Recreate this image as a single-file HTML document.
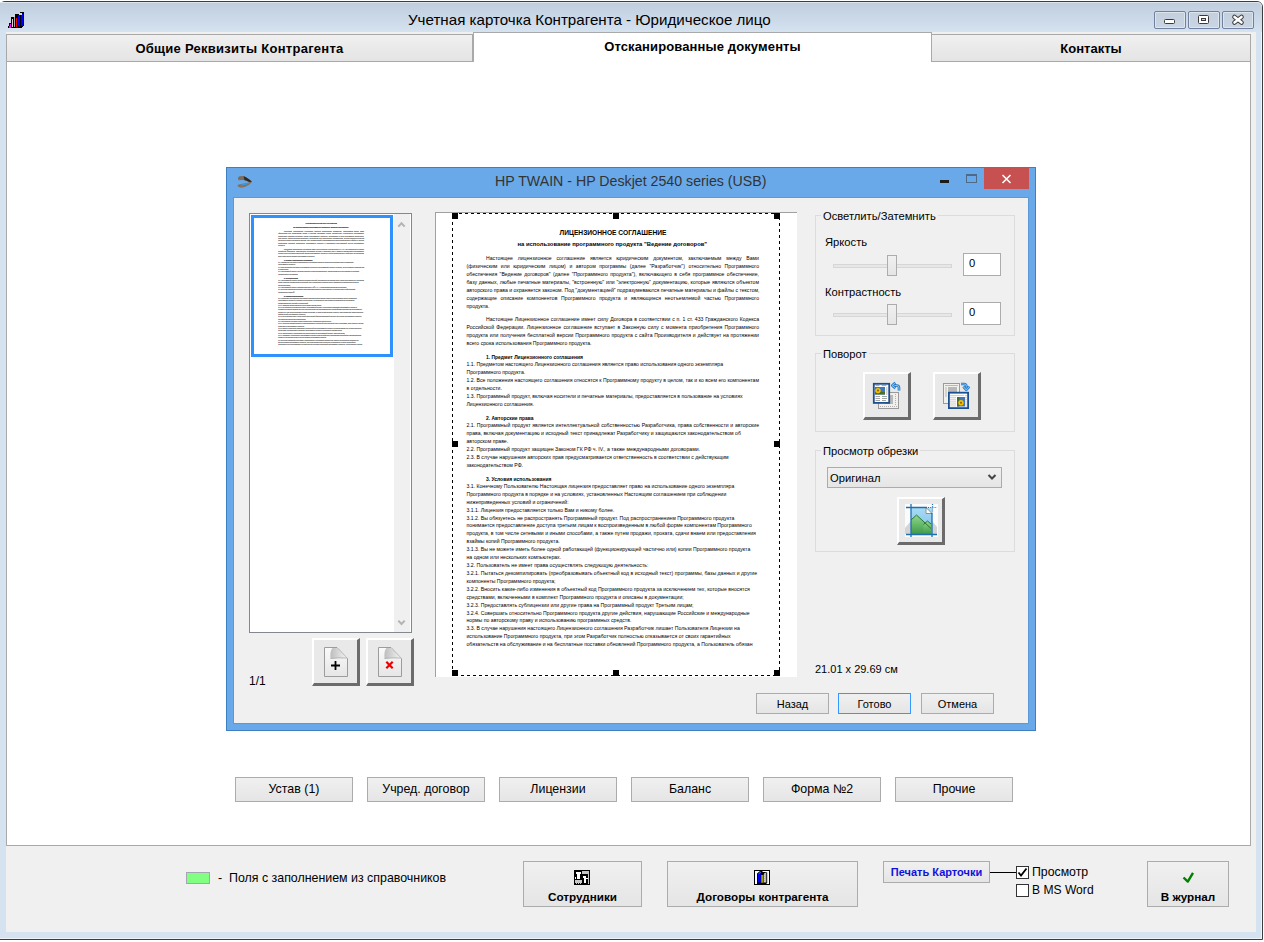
<!DOCTYPE html>
<html><head><meta charset="utf-8">
<style>
*{margin:0;padding:0;box-sizing:border-box}
html,body{width:1264px;height:942px;overflow:hidden;background:#fff;font-family:"Liberation Sans",sans-serif;color:#000}
.a{position:absolute}
#win{position:absolute;left:-1px;top:1px;width:1264px;height:939px;border:1px solid #3d3d3d;border-radius:6px 6px 0 0;background:#d5e3f1;box-shadow:inset -1px -1px 0 #edf3f9}
#tbar{position:absolute;left:0;top:2px;width:1262px;height:30px;border-radius:0 5px 0 0;background:linear-gradient(#bfcddd,#d5e2f0);box-shadow:inset 0 1px 0 #dce6f0}
#client{position:absolute;left:6px;top:32px;width:1250px;height:900px;background:#f0f0f0}
.tab{position:absolute;top:34px;height:28px;border:1px solid #a9a9a9;background:linear-gradient(#f0f0f0,#e4e4e4);font-weight:bold;font-size:13px;text-align:center;line-height:28px}
.tab.act{top:32px;height:30px;background:#fff;border-bottom:none;line-height:28px;z-index:2}
#panel{position:absolute;left:6px;top:61px;width:1245px;height:785px;background:#fff;border:1px solid #a9a9a9}
.wbtn{position:absolute;top:11px;width:32px;height:18px;border:1px solid #71809e;border-radius:2px;background:linear-gradient(#c3cfdc,#c9d5e3);box-shadow:inset 0 0 0 1px #dde6ef}
.btn{position:absolute;border:1px solid #acacac;background:linear-gradient(#f0f0f0,#e5e5e5);font-size:12.5px;text-align:center;color:#000}
.btn3d{position:absolute;background:#ececec}

.hd{width:6px;height:6px;background:#000}
.gb{border:1px solid #dcdcdc}
.gl{font-size:11.2px;background:#f0f0f0;padding:0 2px;white-space:nowrap;color:#000;line-height:14px}
.trk{width:119px;height:4px;border:1px solid #d6d6d6;background:#e7e7e7}
.thm{width:10px;height:21px;border:1px solid #acacac;background:linear-gradient(#f0f0f0,#e5e5e5)}
.ed{width:39px;height:23px;border:1px solid #acacac;background:#fff;font-size:11.2px;padding:3px 0 0 5px}
.b3{background:#e9e9e9;border-top:2px solid #fff;border-left:2px solid #fff;border-right:3px solid #6b6b6b;border-bottom:3px solid #6b6b6b}
.dbtn{width:73px;height:21px;border:1px solid #acacac;background:linear-gradient(#f0f0f0,#e5e5e5);font-size:11px;text-align:center;line-height:21px}
.dl{position:absolute;white-space:nowrap;font-size:5.15px;line-height:8px;color:#000}
.db{font-weight:bold}

.rb{top:777px;width:118px;height:25px;line-height:23px;font-size:12.4px}
.bb{top:861px;height:46px;font-weight:bold;font-size:11.7px;padding-top:28px;line-height:14px}
.cb{width:13px;height:13px;border:1px solid #333;background:#fff}
.thumb .dl{color:#555;-webkit-text-stroke:0.45px #777}
.thumb .db{color:#333;-webkit-text-stroke:0.6px #555}
</style></head><body>
<div id="win"></div>
<div id="tbar"></div>
<div id="client"></div>

<!-- tabs -->
<div class="tab" style="left:6px;width:467px;letter-spacing:0.27px">Общие Реквизиты Контрагента</div>
<div class="tab act" style="left:473px;width:459px;letter-spacing:0.12px">Отсканированные документы</div>
<div class="tab" style="left:931px;width:320px">Контакты</div>
<div id="panel"></div>

<!-- title -->
<div class="a" style="left:408px;top:11px;font-size:15.15px;white-space:nowrap;color:#000">Учетная карточка Контрагента - Юридическое лицо</div>

<div class="wbtn" style="left:1154px"></div>
<div class="wbtn" style="left:1188px"></div>
<div class="wbtn" style="left:1222px"></div>



<!-- ================= DOC BUTTON ROW ================= -->
<div class="btn rb" style="left:235px">Устав (1)</div>
<div class="btn rb" style="left:367px">Учред. договор</div>
<div class="btn rb" style="left:499px">Лицензии</div>
<div class="btn rb" style="left:631px">Баланс</div>
<div class="btn rb" style="left:763px">Форма №2</div>
<div class="btn rb" style="left:895px">Прочие</div>

<!-- ================= BOTTOM BAR ================= -->
<div class="a" style="left:186px;top:872px;width:24px;height:12px;border:1px solid #a4a4b4;background:#80ff80"></div>
<div class="a" style="left:218px;top:870.7px;font-size:12.4px;white-space:nowrap">-&nbsp; Поля с заполнением из справочников</div>

<div class="btn bb" style="left:523px;width:119px">Сотрудники</div>
<div class="btn bb" style="left:667px;width:191px">Договоры контрагента</div>
<div class="btn" style="left:883px;top:861px;width:107px;height:22px;font-weight:bold;font-size:11px;color:#1010e0;line-height:20px">Печать Карточки</div>
<div class="a" style="left:990px;top:872px;width:26px;height:1px;background:#000"></div>
<div class="a cb" style="left:1016px;top:866px"></div>
<svg class="a" style="left:1016px;top:866px" width="13" height="13" viewBox="0 0 13 13"><path d="M2.5 6.5 L5 9.5 L10.5 2.5" stroke="#000" stroke-width="1.8" fill="none"/></svg>
<div class="a" style="left:1032px;top:865px;font-size:12.3px;white-space:nowrap">Просмотр</div>
<div class="a cb" style="left:1016px;top:884px"></div>
<div class="a" style="left:1032px;top:883px;font-size:12.1px;white-space:nowrap">В MS Word</div>
<div class="btn bb" style="left:1147px;width:82px">В журнал</div>


<!-- ================= ICONS main ================= -->
<svg class="a" style="left:8px;top:12px" width="16" height="16" viewBox="0 0 16 16" shape-rendering="crispEdges">
 <path d="M12 0H16V14H15V15H14V16H9V3H10V2H11V1H12Z" fill="#000"/>
 <rect x="10" y="3" width="2" height="12" fill="#0000ff"/>
 <rect x="13" y="2" width="2" height="12" fill="#0000ff"/>
 <rect x="11" y="1" width="3" height="2" fill="#e8dcc8"/>
 <rect x="10" y="14" width="1" height="1" fill="#000"/>
 <rect x="7" y="2" width="3" height="14" fill="#000"/>
 <rect x="8" y="6" width="1" height="9" fill="#ff0000"/>
 <rect x="5" y="3" width="2" height="13" fill="#000"/>
 <rect x="6" y="5" width="1" height="10" fill="#a8a8a8"/>
 <rect x="5" y="3" width="2" height="2" fill="#d8d8d8"/>
 <rect x="3" y="5" width="2" height="11" fill="#000"/>
 <rect x="4" y="7" width="1" height="8" fill="#e8d0d0"/>
 <rect x="1" y="11" width="2" height="5" fill="#000"/>
 <rect x="2" y="12" width="1" height="4" fill="#ff00ff"/>
 <rect x="1" y="14" width="1" height="2" fill="#ff00ff"/>
 <rect x="0" y="14" width="1" height="2" fill="#000"/>
</svg>
<!-- caption buttons glyphs -->
<svg class="a" style="left:1154px;top:11px" width="100" height="18" viewBox="0 0 100 18">
 <rect x="10.5" y="8.5" width="10" height="4" rx="1" fill="#fff" stroke="#3a3a3a" stroke-width="1"/>
 <rect x="44.5" y="4.5" width="10" height="8" rx="1" fill="#fff" stroke="#3a3a3a" stroke-width="1"/>
 <rect x="47.5" y="7.5" width="4" height="2" fill="#c8d4e2" stroke="#3a3a3a" stroke-width="1"/>
 <path d="M80.5 6 L87.5 11.5 M87.5 6 L80.5 11.5" stroke="#3a3a3a" stroke-width="4.6" stroke-linecap="round"/>
 <path d="M80.5 6 L87.5 11.5 M87.5 6 L80.5 11.5" stroke="#fff" stroke-width="2.6" stroke-linecap="round"/>
</svg>
<!-- sotrudniki icon -->
<svg class="a" style="left:574px;top:870px" width="16" height="15" viewBox="0 0 16 15" shape-rendering="crispEdges">
 <rect width="16" height="15" fill="#000"/>
 <path d="M2 2H7V4H5.5V9H3V4H2Z" fill="#fff"/>
 <rect x="1" y="7" width="1" height="2" fill="#fff"/>
 <rect x="8" y="1" width="7" height="3" fill="#c4c4c4"/>
 <rect x="14" y="4" width="1" height="10" fill="#c4c4c4"/>
 <path d="M8.5 6H12V7.5H13.5V9H12V13H9.5V8H8.5Z" fill="#fff"/>
 <path d="M1 10H8V13H7V14H6V13H5V14H4V13H3V14H2V13H1Z" fill="#c8c8c8"/>
</svg>
<!-- dogovory icon -->
<svg class="a" style="left:754px;top:870px" width="16" height="15" viewBox="0 0 16 15">
 <rect width="16" height="15" fill="#000"/>
 <rect x="1" y="1" width="14" height="13" fill="#fff"/>
 <path d="M3 3.5 L6 1 H8.5 V2 H12 L13.2 2.5 V13 L12 14 H3 Z" fill="#000"/>
 <path d="M4 4 L6.8 1.8 V12.5 H4Z" fill="#0000ff"/>
 <path d="M4.8 3.6 L6.8 2" stroke="#fff" stroke-width="0.8" stroke-dasharray="0.8 0.6"/>
 <rect x="7.2" y="5" width="2.2" height="7.8" fill="#a0a000"/>
 <path d="M9.8 4 L12.3 2.6 V12.5 H9.8Z" fill="#b8b8b8"/>
 <path d="M9.8 4 L12 2.6 H12.6 L10.6 4Z" fill="#fff"/>
 <path d="M10.5 5 V12" stroke="#e8e8e8" stroke-width="0.6" stroke-dasharray="1 1"/>
</svg>
<!-- check -->
<svg class="a" style="left:1180px;top:869px" width="16" height="16" viewBox="0 0 16 16"><path d="M3.5 8.5 L7.8 12.6 L13 3.8" stroke="#008000" stroke-width="2.4" fill="none" stroke-linejoin="round"/></svg>

<!-- ================= DIALOG ================= -->
<div class="a" style="left:226px;top:167px;width:810px;height:564px;border:1px solid #3d7fc1;background:#69a9ea"></div>
<div class="a" style="left:233px;top:197px;width:796px;height:527px;border:1px solid #5a98d6;background:#f0f0f0"></div>
<!-- scanner icon -->
<svg class="a" style="left:236px;top:175px" width="18" height="14" viewBox="0 0 18 14">
 <path d="M2 2.4 Q3 0.8 6.5 1 Q10.5 1.6 15.8 6.6 L14.2 7.6 Q10 5.2 6.5 5 Q3.6 4.9 2.4 5.2 Z" fill="#7d6d5f"/>
 <path d="M7.5 1.2 Q10.5 1.8 15.8 6.6 L14.2 7.6 Q11 5.4 8.5 4.9 Z" fill="#2f2924"/>
 <path d="M1.4 10.2 Q2 12.8 6.5 12.6 Q10.5 12.2 15.8 7.6 L14.4 6.8 Q10 8.6 6.5 8.8 Q3 9 1.4 10.2 Z" fill="#85705c"/>
 <path d="M4.5 9.6 Q10 9 14.2 7.2 L13.4 8.6 Q9 10.6 5 10.8 Z" fill="#3a9ad8"/>
</svg>
<div class="a" style="left:495px;top:173px;font-size:14.2px;color:#333;white-space:nowrap">HP TWAIN - HP Deskjet 2540 series (USB)</div>
<!-- min / max / close -->
<div class="a" style="left:940px;top:180px;width:9px;height:3px;background:#1c1c1c"></div>
<div class="a" style="left:966px;top:174px;width:11px;height:9px;border:1px solid #4d6a88;border-top-width:2px"></div>
<div class="a" style="left:984px;top:168px;width:45px;height:21px;background:#c75050"></div>
<svg class="a" style="left:984px;top:168px" width="45" height="21" viewBox="0 0 45 21"><path d="M18.5 7 L26.5 15 M26.5 7 L18.5 15" stroke="#fff" stroke-width="1.6"/></svg>

<!-- listbox -->
<div class="a" style="left:249px;top:213px;width:163px;height:420px;border:1px solid #828790;background:#fff"></div>
<div class="a" style="left:394px;top:214px;width:16px;height:418px;background:#f0f0f0"></div>
<svg class="a" style="left:394px;top:214px" width="16" height="418" viewBox="0 0 16 418">
 <path d="M4.3 12.6 L7.5 9.2 L10.7 12.6" stroke="#b4b4b4" stroke-width="2" fill="none"/>
 <path d="M4.3 406.6 L7.5 410 L10.7 406.6" stroke="#b4b4b4" stroke-width="2" fill="none"/>
</svg>
<div class="a" style="left:251px;top:215px;width:142px;height:142px;border:3px solid #2e91fd;background:#fff;overflow:hidden" id="thumbbox"><div class="thumb" style="position:absolute;left:20.05px;top:-0.2px;width:328px;height:463px;transform:scale(0.293,0.294);transform-origin:0 0">
<div class="dl db" style="left:107.60px;top:16.10px;width:106.80px;font-size:6.67px;text-align-last:justify;text-align:justify">ЛИЦЕНЗИОННОЕ СОГЛАШЕНИЕ</div>
<div class="dl db" style="left:65.50px;top:27.29px;font-size:5.87px">на использование программного продукта "Ведение договоров"</div>
<div class="dl" style="left:34.00px;top:40.95px;width:273.00px;text-align:justify;text-align-last:justify">Настоящее лицензионное соглашение является юридическим документом, заключаемым между Вами</div>
<div class="dl" style="left:14.50px;top:48.95px;width:292.50px;text-align:justify;text-align-last:justify">(физическим или юридическим лицом) и автором программы (далее  &quot;Разработчик&quot;) относительно Программного</div>
<div class="dl" style="left:14.50px;top:56.95px;width:292.50px;text-align:justify;text-align-last:justify">обеспечения &quot;Ведение договоров&quot; (далее &quot;Программного продукта&quot;), включающего в себя программное обеспечение,</div>
<div class="dl" style="left:14.50px;top:64.85px;width:292.50px;text-align:justify;text-align-last:justify">базу данных, любые печатные материалы, &quot;встроенную&quot; или &quot;электронную&quot; документацию, которые являются объектом</div>
<div class="dl" style="left:14.50px;top:72.85px;width:292.50px;text-align:justify;text-align-last:justify">авторского права и охраняется законом. Под &quot;документацией&quot; подразумеваются печатные материалы и файлы с текстом,</div>
<div class="dl" style="left:14.50px;top:80.85px;width:292.50px;text-align:justify;text-align-last:justify">содержащие описание компонентов Программного продукта и являющиеся неотъемлемой частью Программного</div>
<div class="dl" style="left:14.50px;top:88.85px">продукта.</div>
<div class="dl" style="left:34.00px;top:101.55px;width:273.00px;text-align:justify;text-align-last:justify">Настоящее Лицензионное соглашение имеет силу Договора в соответствии с п. 1 ст. 433 Гражданского Кодекса</div>
<div class="dl" style="left:14.50px;top:109.55px;width:292.50px;text-align:justify;text-align-last:justify">Российской Федерации. Лицензионное соглашение вступает в Законную силу с момента приобретения Программного</div>
<div class="dl" style="left:14.50px;top:117.55px;width:292.50px;text-align:justify;text-align-last:justify">продукта или получения бесплатной версии Программного продукта с сайта Производителя и действует на протяжении</div>
<div class="dl" style="left:14.50px;top:125.55px">всего срока использования Программного продукта.</div>
<div class="dl db" style="left:34.00px;top:140.87px;font-size:4.96px">1. Предмет Лицензионного соглашения</div>
<div class="dl" style="left:14.50px;top:146.75px">1.1. Предметом настоящего Лицензионного соглашения является право использования одного экземпляра</div>
<div class="dl" style="left:14.50px;top:154.75px">Программного продукта.</div>
<div class="dl" style="left:14.50px;top:162.75px;width:292.50px;text-align:justify;text-align-last:justify">1.2. Все положения настоящего соглашения относятся к Программному продукту в целом, так и ко всем его компонентам</div>
<div class="dl" style="left:14.50px;top:170.75px">в отдельности.</div>
<div class="dl" style="left:14.50px;top:178.65px">1.3. Программный продукт, включая носители и печатные материалы, предоставляется в пользование на условиях</div>
<div class="dl" style="left:14.50px;top:186.65px">Лицензионного соглашения.</div>
<div class="dl db" style="left:34.00px;top:202.17px;font-size:4.96px">2. Авторские права</div>
<div class="dl" style="left:14.50px;top:208.35px;width:292.50px;text-align:justify;text-align-last:justify">2.1. Программный продукт является интеллектуальной собственностью Разработчика, права собственности и авторские</div>
<div class="dl" style="left:14.50px;top:216.25px">права, включая документацию и исходный текст принадлежат  Разработчику и защищаются законодательством об</div>
<div class="dl" style="left:14.50px;top:224.25px">авторском праве.</div>
<div class="dl" style="left:14.50px;top:231.95px">2.2. Программный продукт защищен Законом ГК РФ ч. IV., а также международными договорами.</div>
<div class="dl" style="left:14.50px;top:239.95px">2.3. В случае нарушения авторских прав предусматривается ответственность в соответствии с действующим</div>
<div class="dl" style="left:14.50px;top:247.95px">законодательством РФ.</div>
<div class="dl db" style="left:34.00px;top:263.07px;font-size:4.96px">3. Условия использования</div>
<div class="dl" style="left:14.50px;top:268.85px">3.1. Конечному Пользователю Настоящая лицензия предоставляет право на использование одного экземпляра</div>
<div class="dl" style="left:14.50px;top:276.77px">Программного продукта в порядке и на условиях, установленных Настоящим соглашением при соблюдении</div>
<div class="dl" style="left:14.50px;top:284.69px">нижеприведенных условий и ограничений:</div>
<div class="dl" style="left:14.50px;top:292.61px">3.1.1. Лицензия предоставляется только Вам и никому более.</div>
<div class="dl" style="left:14.50px;top:300.53px">3.1.2. Вы обязуетесь не распространять Программный продукт. Под распространением Программного продукта</div>
<div class="dl" style="left:14.50px;top:308.45px">понимается предоставление доступа третьим лицам к воспроизведенным в любой форме компонентам Программного</div>
<div class="dl" style="left:14.50px;top:316.37px">продукта, в том числе сетевыми и иными способами, а также путем продажи, проката, сдачи внаем или предоставления</div>
<div class="dl" style="left:14.50px;top:324.29px">взаймы копий Программного продукта.</div>
<div class="dl" style="left:14.50px;top:332.21px">3.1.3. Вы не можете иметь более одной работающей (функционирующей частично или) копии Программного продукта</div>
<div class="dl" style="left:14.50px;top:340.13px">на одном или нескольких компьютерах.</div>
<div class="dl" style="left:14.50px;top:348.05px">3.2. Пользователь не имеет права осуществлять следующую деятельность:</div>
<div class="dl" style="left:14.50px;top:355.97px">3.2.1. Пытаться декомпилировать (преобразовывать объектный код в исходный текст) программы, базы данных и другие</div>
<div class="dl" style="left:14.50px;top:363.89px">компоненты Программного продукта;</div>
<div class="dl" style="left:14.50px;top:371.81px">3.2.2. Вносить какие-либо изменения в объектный код Программного продукта за исключением тех, которые вносятся</div>
<div class="dl" style="left:14.50px;top:379.73px">средствами, включенными в комплект Программного продукта и описаны в документации;</div>
<div class="dl" style="left:14.50px;top:387.65px">3.2.3. Предоставлять сублицензии или другие права на Программный продукт Третьим лицам;</div>
<div class="dl" style="left:14.50px;top:395.57px">3.2.4. Совершать относительно Программного продукта другие действия, нарушающие Российские и международные</div>
<div class="dl" style="left:14.50px;top:403.49px">нормы по авторскому праву и использованию программных средств.</div>
<div class="dl" style="left:14.50px;top:411.41px">3.3. В случае нарушения настоящего Лицензионного соглашения Разработчик лишает Пользователя Лицензии на</div>
<div class="dl" style="left:14.50px;top:419.33px">использование Программного продукта, при этом Разработчик полностью отказывается от своих гарантийных</div>
<div class="dl" style="left:14.50px;top:427.25px">обязательств на обслуживание и на бесплатные поставки обновлений Программного продукта, а Пользователь обязан</div>
</div></div>

<!-- add / delete buttons -->
<div class="a b3" style="left:312px;top:638px;width:48px;height:48px"></div>
<div class="a b3" style="left:366px;top:638px;width:48px;height:48px"></div>
<div class="a" style="left:249px;top:674px;font-size:12px;color:#000">1/1</div>

<!-- preview -->
<div class="a" style="left:435px;top:212px;width:362px;height:465px;background:#fff;border-left:1px solid #a0a0a0;border-top:1px solid #a0a0a0"></div>
<div class="a" id="doc" style="left:452px;top:213px;width:328px;height:463px">
<div class="dl db" style="left:107.60px;top:16.10px;width:106.80px;font-size:6.67px;text-align-last:justify;text-align:justify">ЛИЦЕНЗИОННОЕ СОГЛАШЕНИЕ</div>
<div class="dl db" style="left:65.50px;top:27.29px;font-size:5.87px">на использование программного продукта "Ведение договоров"</div>
<div class="dl" style="left:34.00px;top:40.95px;width:273.00px;text-align:justify;text-align-last:justify">Настоящее лицензионное соглашение является юридическим документом, заключаемым между Вами</div>
<div class="dl" style="left:14.50px;top:48.95px;width:292.50px;text-align:justify;text-align-last:justify">(физическим или юридическим лицом) и автором программы (далее  &quot;Разработчик&quot;) относительно Программного</div>
<div class="dl" style="left:14.50px;top:56.95px;width:292.50px;text-align:justify;text-align-last:justify">обеспечения &quot;Ведение договоров&quot; (далее &quot;Программного продукта&quot;), включающего в себя программное обеспечение,</div>
<div class="dl" style="left:14.50px;top:64.85px;width:292.50px;text-align:justify;text-align-last:justify">базу данных, любые печатные материалы, &quot;встроенную&quot; или &quot;электронную&quot; документацию, которые являются объектом</div>
<div class="dl" style="left:14.50px;top:72.85px;width:292.50px;text-align:justify;text-align-last:justify">авторского права и охраняется законом. Под &quot;документацией&quot; подразумеваются печатные материалы и файлы с текстом,</div>
<div class="dl" style="left:14.50px;top:80.85px;width:292.50px;text-align:justify;text-align-last:justify">содержащие описание компонентов Программного продукта и являющиеся неотъемлемой частью Программного</div>
<div class="dl" style="left:14.50px;top:88.85px">продукта.</div>
<div class="dl" style="left:34.00px;top:101.55px;width:273.00px;text-align:justify;text-align-last:justify">Настоящее Лицензионное соглашение имеет силу Договора в соответствии с п. 1 ст. 433 Гражданского Кодекса</div>
<div class="dl" style="left:14.50px;top:109.55px;width:292.50px;text-align:justify;text-align-last:justify">Российской Федерации. Лицензионное соглашение вступает в Законную силу с момента приобретения Программного</div>
<div class="dl" style="left:14.50px;top:117.55px;width:292.50px;text-align:justify;text-align-last:justify">продукта или получения бесплатной версии Программного продукта с сайта Производителя и действует на протяжении</div>
<div class="dl" style="left:14.50px;top:125.55px">всего срока использования Программного продукта.</div>
<div class="dl db" style="left:34.00px;top:140.87px;font-size:4.96px">1. Предмет Лицензионного соглашения</div>
<div class="dl" style="left:14.50px;top:146.75px">1.1. Предметом настоящего Лицензионного соглашения является право использования одного экземпляра</div>
<div class="dl" style="left:14.50px;top:154.75px">Программного продукта.</div>
<div class="dl" style="left:14.50px;top:162.75px;width:292.50px;text-align:justify;text-align-last:justify">1.2. Все положения настоящего соглашения относятся к Программному продукту в целом, так и ко всем его компонентам</div>
<div class="dl" style="left:14.50px;top:170.75px">в отдельности.</div>
<div class="dl" style="left:14.50px;top:178.65px">1.3. Программный продукт, включая носители и печатные материалы, предоставляется в пользование на условиях</div>
<div class="dl" style="left:14.50px;top:186.65px">Лицензионного соглашения.</div>
<div class="dl db" style="left:34.00px;top:202.17px;font-size:4.96px">2. Авторские права</div>
<div class="dl" style="left:14.50px;top:208.35px;width:292.50px;text-align:justify;text-align-last:justify">2.1. Программный продукт является интеллектуальной собственностью Разработчика, права собственности и авторские</div>
<div class="dl" style="left:14.50px;top:216.25px">права, включая документацию и исходный текст принадлежат  Разработчику и защищаются законодательством об</div>
<div class="dl" style="left:14.50px;top:224.25px">авторском праве.</div>
<div class="dl" style="left:14.50px;top:231.95px">2.2. Программный продукт защищен Законом ГК РФ ч. IV., а также международными договорами.</div>
<div class="dl" style="left:14.50px;top:239.95px">2.3. В случае нарушения авторских прав предусматривается ответственность в соответствии с действующим</div>
<div class="dl" style="left:14.50px;top:247.95px">законодательством РФ.</div>
<div class="dl db" style="left:34.00px;top:263.07px;font-size:4.96px">3. Условия использования</div>
<div class="dl" style="left:14.50px;top:268.85px">3.1. Конечному Пользователю Настоящая лицензия предоставляет право на использование одного экземпляра</div>
<div class="dl" style="left:14.50px;top:276.77px">Программного продукта в порядке и на условиях, установленных Настоящим соглашением при соблюдении</div>
<div class="dl" style="left:14.50px;top:284.69px">нижеприведенных условий и ограничений:</div>
<div class="dl" style="left:14.50px;top:292.61px">3.1.1. Лицензия предоставляется только Вам и никому более.</div>
<div class="dl" style="left:14.50px;top:300.53px">3.1.2. Вы обязуетесь не распространять Программный продукт. Под распространением Программного продукта</div>
<div class="dl" style="left:14.50px;top:308.45px">понимается предоставление доступа третьим лицам к воспроизведенным в любой форме компонентам Программного</div>
<div class="dl" style="left:14.50px;top:316.37px">продукта, в том числе сетевыми и иными способами, а также путем продажи, проката, сдачи внаем или предоставления</div>
<div class="dl" style="left:14.50px;top:324.29px">взаймы копий Программного продукта.</div>
<div class="dl" style="left:14.50px;top:332.21px">3.1.3. Вы не можете иметь более одной работающей (функционирующей частично или) копии Программного продукта</div>
<div class="dl" style="left:14.50px;top:340.13px">на одном или нескольких компьютерах.</div>
<div class="dl" style="left:14.50px;top:348.05px">3.2. Пользователь не имеет права осуществлять следующую деятельность:</div>
<div class="dl" style="left:14.50px;top:355.97px">3.2.1. Пытаться декомпилировать (преобразовывать объектный код в исходный текст) программы, базы данных и другие</div>
<div class="dl" style="left:14.50px;top:363.89px">компоненты Программного продукта;</div>
<div class="dl" style="left:14.50px;top:371.81px">3.2.2. Вносить какие-либо изменения в объектный код Программного продукта за исключением тех, которые вносятся</div>
<div class="dl" style="left:14.50px;top:379.73px">средствами, включенными в комплект Программного продукта и описаны в документации;</div>
<div class="dl" style="left:14.50px;top:387.65px">3.2.3. Предоставлять сублицензии или другие права на Программный продукт Третьим лицам;</div>
<div class="dl" style="left:14.50px;top:395.57px">3.2.4. Совершать относительно Программного продукта другие действия, нарушающие Российские и международные</div>
<div class="dl" style="left:14.50px;top:403.49px">нормы по авторскому праву и использованию программных средств.</div>
<div class="dl" style="left:14.50px;top:411.41px">3.3. В случае нарушения настоящего Лицензионного соглашения Разработчик лишает Пользователя Лицензии на</div>
<div class="dl" style="left:14.50px;top:419.33px">использование Программного продукта, при этом Разработчик полностью отказывается от своих гарантийных</div>
<div class="dl" style="left:14.50px;top:427.25px">обязательств на обслуживание и на бесплатные поставки обновлений Программного продукта, а Пользователь обязан</div>
</div>
<div class="a" style="left:452px;top:213px;width:328px;height:1px;background:repeating-linear-gradient(90deg,#000 0 3px,transparent 3px 6px);background-position:1px 0"></div>
<div class="a" style="left:452px;top:675px;width:328px;height:1px;background:repeating-linear-gradient(90deg,#000 0 3px,transparent 3px 6px);background-position:3px 0"></div>
<div class="a" style="left:452px;top:213px;width:1px;height:463px;background:repeating-linear-gradient(180deg,#000 0 3px,transparent 3px 6px);background-position:0 3px"></div>
<div class="a" style="left:779px;top:213px;width:1px;height:463px;background:repeating-linear-gradient(180deg,#000 0 3px,transparent 3px 6px);background-position:0 4px"></div>
<div class="a hd" style="left:452px;top:213px"></div>
<div class="a hd" style="left:613px;top:213px"></div>
<div class="a hd" style="left:774px;top:213px"></div>
<div class="a hd" style="left:452px;top:441px"></div>
<div class="a hd" style="left:774px;top:441px"></div>
<div class="a hd" style="left:452px;top:670px"></div>
<div class="a hd" style="left:613px;top:670px"></div>
<div class="a hd" style="left:774px;top:670px"></div>

<!-- group boxes -->
<div class="a gb" style="left:815px;top:215px;width:200px;height:121px"></div>
<div class="a gl" style="left:821px;top:209px">Осветлить/Затемнить</div>
<div class="a" style="left:825px;top:236px;font-size:11.2px">Яркость</div>
<div class="a trk" style="left:833px;top:264px"></div>
<div class="a thm" style="left:887px;top:255px"></div>
<div class="a ed" style="left:963px;top:253px;width:38px">0</div>
<div class="a" style="left:825px;top:286px;font-size:11.2px">Контрастность</div>
<div class="a trk" style="left:833px;top:313px"></div>
<div class="a thm" style="left:887px;top:304px"></div>
<div class="a ed" style="left:963px;top:302px;width:38px">0</div>

<div class="a gb" style="left:815px;top:353px;width:200px;height:79px"></div>
<div class="a gl" style="left:821px;top:347px">Поворот</div>
<div class="a b3" style="left:863px;top:372px;width:48px;height:48px"></div>
<div class="a b3" style="left:933px;top:372px;width:48px;height:48px"></div>

<div class="a gb" style="left:815px;top:450px;width:200px;height:102px"></div>
<div class="a gl" style="left:821px;top:443.5px">Просмотр обрезки</div>
<div class="a" style="left:827px;top:467px;width:175px;height:21px;border:1px solid #acacac;background:linear-gradient(#f0f0f0,#e5e5e5)"></div>
<div class="a" style="left:830px;top:472px;font-size:11.2px">Оригинал</div>
<svg class="a" style="left:986px;top:473px" width="12" height="9" viewBox="0 0 12 9"><path d="M2.5 2 L6 5.5 L9.5 2" stroke="#444" stroke-width="2" fill="none"/></svg>
<div class="a b3" style="left:897px;top:497px;width:48px;height:48px"></div>

<div class="a" style="left:815px;top:663px;font-size:11px;white-space:nowrap">21.01 x 29.69 см</div>
<div class="a dbtn" style="left:756px;top:693px">Назад</div>
<div class="a dbtn" style="left:838px;top:693px;border-color:#3399ff">Готово</div>
<div class="a dbtn" style="left:921px;top:693px">Отмена</div>

<!-- ================= ICONS dialog ================= -->
<svg class="a" style="left:324px;top:647px" width="25" height="31" viewBox="0 0 25 31">
 <defs><linearGradient id="pg" x1="0" y1="0" x2="0" y2="1"><stop offset="0" stop-color="#fafafa"/><stop offset="1" stop-color="#e6e6e6"/></linearGradient>
 <linearGradient id="curl" x1="0" y1="0" x2="1" y2="0"><stop offset="0" stop-color="#bdbdbd"/><stop offset="0.6" stop-color="#dedede"/><stop offset="1" stop-color="#f4f4f4"/></linearGradient></defs>
 <path d="M0.5 0.5 H13 L23.5 11.5 V29.5 H0.5 Z" fill="url(#pg)" stroke="#9c9c9c"/>
 <path d="M6.5 11.5 Q6 3 8.5 1 H13 L23 11 Q15 10.5 6.5 11.5Z" fill="url(#curl)"/>
 <path d="M6.5 11.5 Q15 10.5 23 11" stroke="#a8a8a8" fill="none" stroke-width="0.8"/>
 <path d="M7 18.5 H16 M11.5 14 V23" stroke="#000" stroke-width="1.8"/>
</svg>
<svg class="a" style="left:378px;top:647px" width="25" height="31" viewBox="0 0 25 31">
 <path d="M0.5 0.5 H13 L23.5 11.5 V29.5 H0.5 Z" fill="url(#pg)" stroke="#9c9c9c"/>
 <path d="M6.5 11.5 Q6 3 8.5 1 H13 L23 11 Q15 10.5 6.5 11.5Z" fill="url(#curl)"/>
 <path d="M6.5 11.5 Q15 10.5 23 11" stroke="#a8a8a8" fill="none" stroke-width="0.8"/>
 <path d="M8.3 14.8 L14.7 21.2 M14.7 14.8 L8.3 21.2" stroke="#ee0000" stroke-width="2.2"/>
</svg>
<!-- rotate left -->
<svg class="a" style="left:872px;top:381px" width="30" height="30" viewBox="0 0 30 30">
 <rect x="6.5" y="11.5" width="20" height="16" fill="#f2f0ea" stroke="#9a9a9a"/>
 <rect x="13" y="14" width="8" height="9" fill="#b8b8b8"/>
 <path d="M8 25.5 H25 M23.5 13 V24" stroke="#b0b0b0" stroke-dasharray="1 1"/>
 <rect x="1.8" y="2.8" width="15.4" height="19.1" fill="#fff" stroke="#1c4f8f" stroke-width="1.8"/>
 <rect x="3" y="6" width="10" height="7.5" fill="#3f77c0"/>
 <rect x="3" y="11" width="10" height="2.5" fill="#4c6e2c"/>
 <circle cx="6" cy="9.6" r="2.7" fill="#f2c200"/><circle cx="6" cy="9.6" r="1" fill="#8a5a00"/>
 <path d="M3.5 4.6 H7.5 M9.5 4.6 H14.5 M14 7 H15.5 M14 9 H15.5 M14 11 H15.5 M14 13 H15.5 M3.5 15.5 H8 M10 15.5 H15 M3.5 17.5 H8 M10 17.5 H15 M3.5 19.5 H8 M10 19.5 H14" stroke="#9a9a9a" stroke-width="0.9"/>
 <path d="M27 9.5 V6.8 Q27 4.5 24.5 4.5 H22.5 M23.3 1.8 L20.3 4.5 L23.3 7.2" stroke="#1a6fc0" stroke-width="2.6" fill="none" stroke-linejoin="round"/>
 <path d="M27 9.5 V6.8 Q27 4.5 24.5 4.5 H22.5 M23.3 1.8 L20.3 4.5 L23.3 7.2" stroke="#7cc0f2" stroke-width="1.1" fill="none" stroke-linejoin="round"/>
</svg>
<!-- rotate right -->
<svg class="a" style="left:942px;top:381px" width="30" height="30" viewBox="0 0 30 30">
 <rect x="1.5" y="2.5" width="16" height="20" fill="#f2f0ea" stroke="#9a9a9a"/>
 <rect x="6" y="6" width="9" height="7" fill="#b8b8b8"/>
 <path d="M3 4.5 H16 M3 7 H5 M3 9 H5 M3 11 H5 M3 13 H5 M3 15 H5" stroke="#b8b8b8"/>
 <rect x="6.9" y="11.7" width="19.2" height="15.4" fill="#fff" stroke="#1c4f8f" stroke-width="1.8"/>
 <rect x="15" y="16" width="8" height="9.5" fill="#3f77c0"/>
 <rect x="15" y="16" width="2.2" height="9.5" fill="#4c6e2c"/>
 <circle cx="19" cy="21.8" r="2.7" fill="#f2c200"/><circle cx="19" cy="21.8" r="1" fill="#8a5a00"/>
 <path d="M9 14 V25.5 M11 14 V25.5 M13 14 V25.5 M15 14 V15 M17 14 V15 M19 14 V15 M21 14 V15 M24 14 V25.5" stroke="#9a9a9a" stroke-width="0.9" stroke-dasharray="1.2 0.9"/>
 <path d="M19 3 H22 Q24.3 3 24.3 5.3 V6.5 M21.3 5.6 L24.3 8.8 L27.3 5.6" stroke="#1a6fc0" stroke-width="2.6" fill="none" stroke-linejoin="round"/>
 <path d="M19 3 H22 Q24.3 3 24.3 5.3 V6.5 M21.3 5.6 L24.3 8.8 L27.3 5.6" stroke="#7cc0f2" stroke-width="1.1" fill="none" stroke-linejoin="round"/>
</svg>
<!-- crop preview -->
<svg class="a" style="left:905px;top:504px" width="33" height="34" viewBox="0 0 33 34">
 <defs><linearGradient id="sky" x1="0" y1="0" x2="0" y2="1"><stop offset="0" stop-color="#a9dcf5"/><stop offset="1" stop-color="#78bde6"/></linearGradient>
 <linearGradient id="grn" x1="0" y1="0" x2="0" y2="1"><stop offset="0" stop-color="#8fd98a"/><stop offset="1" stop-color="#3f9a4a"/></linearGradient></defs>
 <rect x="0" y="0" width="33" height="33" fill="#fbfbfb"/>
 <path d="M0 24 L6 17 L6 30 L0 30Z M27 17 L32 23 V30 H27Z" fill="#d4d4d4"/>
 <rect x="6" y="3.5" width="21" height="27" fill="url(#sky)"/>
 <path d="M6 16 L11.5 11 L26 24.5 L26 30 L6 30Z" fill="url(#grn)"/>
 <path d="M18.5 20.5 L22.5 17 L26 20 L26 30 L18 30Z" fill="url(#grn)"/>
 <path d="M6 16 L11.5 11 L26 24.5 M18.5 20.5 L22.5 17 L26 20" stroke="#1f6b2c" stroke-width="0.9" fill="none"/>
 <path d="M21 3.5 L27 9.5 H21Z" fill="#fff" stroke="#888" stroke-width="0.9"/>
 <path d="M1 3.5 H22 M6 0 V33 M27 9 V33 M1 30.5 H32" stroke="#1d6fb0" stroke-width="1.3"/>
 <path d="M23 3.5 H32 M27.5 0 V9" stroke="#1d6fb0" stroke-width="1.2" stroke-dasharray="1 1.2"/>
</svg>
</body></html>
